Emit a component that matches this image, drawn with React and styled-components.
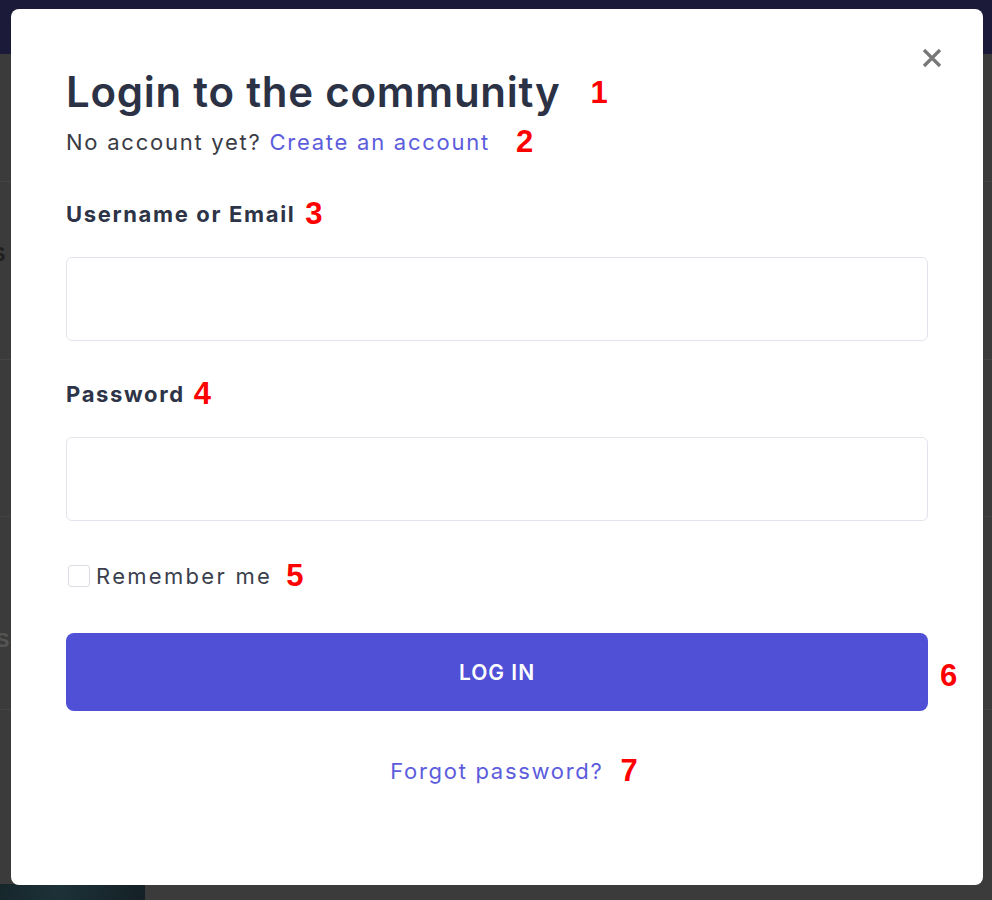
import React from "react";
import styled, { createGlobalStyle } from "styled-components";

const Global = createGlobalStyle`
  html, body { margin: 0; padding: 0; }
  body {
    background: #3b3b3b;
    font-family: Inter, "Noto Sans", "Liberation Sans", sans-serif;
    -webkit-font-smoothing: antialiased;
  }
  * { box-sizing: border-box; }
`;

const Page = styled.div`
  position: relative;
  width: 992px;
  height: 900px;
  overflow: hidden;
  background: #3b3b3b;
  display: flex;
  flex-direction: column;
`;

const TopBar = styled.div`
  height: 54px;
  background: #1b1a39;
  flex: none;
`;

const BgRow = styled.div`
  height: ${(p) => p.$h}px;
  flex: none;
  border-bottom: 1px solid #444444;
  font: 700 20px "Liberation Sans", sans-serif;
  display: flex;
  align-items: center;
`;

const BgLetter = styled.span`
  margin-left: ${(p) => p.$ml}px;
  transform: translateY(${(p) => p.$dy}px);
  color: ${(p) => p.$c};
`;

const Thumb = styled.div`
  margin-top: auto;
  width: 145px;
  height: 16px;
  background: linear-gradient(90deg, #16272c, #1d3138 40%, #142126);
`;

const Modal = styled.div`
  position: absolute;
  top: 9px;
  left: 11px;
  width: 972px;
  height: 876px;
  background: #ffffff;
  border-radius: 8px;
  padding: 59px 55px 0 55px;
  display: flex;
  flex-direction: column;
`;

const Close = styled.button`
  position: absolute;
  top: 38px;
  right: 40px;
  width: 22px;
  height: 22px;
  padding: 0;
  border: 0;
  background: transparent;
  display: flex;
  align-items: center;
  justify-content: center;
  cursor: pointer;
`;

const Marker = styled.span`
  font: 700 31px/1 "Liberation Sans", Arial, sans-serif;
  color: #ff0000;
  margin-left: ${(p) => p.$ml || 12}px;
  letter-spacing: 0;
`;

const TitleRow = styled.div`
  display: flex;
  align-items: center;
`;

const Title = styled.h1`
  margin: 0;
  font-size: 42px;
  line-height: 48px;
  font-weight: 600;
  color: #2c3245;
  letter-spacing: 0.75px;
`;

const SubRow = styled.div`
  display: flex;
  align-items: center;
  margin-top: 10px;
`;

const Sub = styled.p`
  margin: 0;
  font-size: 22px;
  line-height: 30px;
  color: #3a3b45;
  letter-spacing: 1.75px;
`;

const Link = styled.a`
  color: #5c5cdc;
  text-decoration: none;
  cursor: pointer;
`;

const Field = styled.div`
  display: flex;
  flex-direction: column;
  margin-top: ${(p) => p.$mt}px;
`;

const LabelRow = styled.div`
  display: flex;
  align-items: center;
`;

const Label = styled.label`
  font-size: 22px;
  line-height: 30px;
  font-weight: 700;
  color: #2d3447;
  letter-spacing: 1.65px;
`;

const Input = styled.input`
  margin-top: 28px;
  width: 100%;
  height: 84px;
  border: 1.5px solid #e3e3ec;
  border-radius: 6px;
  background: #fff;
  outline: none;
  font: inherit;
  padding: 0 20px;
`;

const CheckRow = styled.label`
  display: flex;
  align-items: center;
  margin-top: 39px;
  padding-left: 2px;
  cursor: pointer;
`;

const Box = styled.span`
  width: 22px;
  height: 22px;
  border: 1.5px solid #dcdce6;
  border-radius: 3px;
  background: #fff;
  flex: none;
`;

const CheckText = styled.span`
  margin-left: 6px;
  font-size: 22px;
  line-height: 30px;
  color: #3b3f4d;
  letter-spacing: 2.3px;
`;

const ButtonWrap = styled.div`
  position: relative;
  margin-top: 42px;
`;

const Button = styled.button`
  width: 100%;
  height: 78px;
  border: 0;
  border-radius: 8px;
  background: #4f50d6;
  color: #ffffff;
  font-family: inherit;
  font-size: 21px;
  font-weight: 600;
  letter-spacing: 1px;
  cursor: pointer;
`;

const SideMarker = styled(Marker)`
  position: absolute;
  left: calc(100% + 12px);
  top: 27px;
  margin-left: 0;
`;

const ForgotRow = styled.div`
  display: flex;
  justify-content: center;
  align-items: center;
  margin-top: 44px;
  padding-left: 34px;
`;

const Forgot = styled(Link)`
  font-size: 22px;
  line-height: 30px;
  letter-spacing: 1.7px;
`;

export default function App() {
  return (
    <>
      <Global />
      <Page>
        <TopBar />
        <BgRow $h={128} />
        <BgRow $h={178}>
          <BgLetter $c="#1e1e1e" $ml={-8} $dy={-16}>S</BgLetter>
        </BgRow>
        <BgRow $h={157} />
        <BgRow $h={193}>
          <BgLetter $c="#555555" $ml={-4} $dy={27}>S</BgLetter>
        </BgRow>
        <Thumb />
        <Modal role="dialog" aria-label="Login">
          <Close aria-label="Close">
            <svg width="20" height="20" viewBox="0 0 20 20">
              <path d="M2 2 L18 18 M18 2 L2 18" stroke="#777777" strokeWidth="3.2" strokeLinecap="butt" />
            </svg>
          </Close>
          <TitleRow>
            <Title>Login to the community</Title>
            <Marker $ml={30}>1</Marker>
          </TitleRow>
          <SubRow>
            <Sub>
              No account yet? <Link>Create an account</Link>
            </Sub>
            <Marker $ml={26}>2</Marker>
          </SubRow>
          <Field $mt={41}>
            <LabelRow>
              <Label htmlFor="user">Username or Email</Label>
              <Marker $ml={10}>3</Marker>
            </LabelRow>
            <Input id="user" type="text" />
          </Field>
          <Field $mt={37}>
            <LabelRow>
              <Label htmlFor="pass">Password</Label>
              <Marker $ml={9}>4</Marker>
            </LabelRow>
            <Input id="pass" type="password" />
          </Field>
          <CheckRow>
            <Box />
            <CheckText>Remember me</CheckText>
            <Marker $ml={14}>5</Marker>
          </CheckRow>
          <ButtonWrap>
            <Button type="button">LOG IN</Button>
            <SideMarker>6</SideMarker>
          </ButtonWrap>
          <ForgotRow>
            <Forgot>Forgot password?</Forgot>
            <Marker $ml={17}>7</Marker>
          </ForgotRow>
        </Modal>
      </Page>
    </>
  );
}
